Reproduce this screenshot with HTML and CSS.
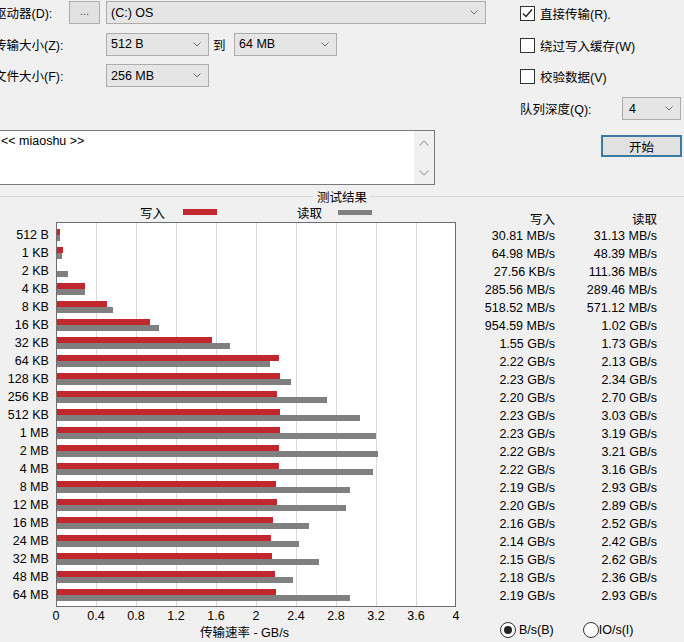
FILE: index.html
```html
<!DOCTYPE html>
<html lang="zh-CN">
<head>
    <meta charset="UTF-8">
    <title>磁盘基准测试</title>
    <link rel="stylesheet" href="styles.css">
</head>
<body>
<div class="window">
    <!-- 设置区 -->
    <div class="top">
        <div class="left">
            <div class="settings">
                <span class="lbl">驱动器(D):</span>
                <button class="btn-dots">...</button>
                <div class="combo combo-drive">(C:) OS
                    <svg class="chev" width="8" height="5" viewBox="0 0 8 5"><polyline points="0.5,0.5 4,4 7.5,0.5"/></svg>
                </div>

                <span class="lbl">传输大小(Z):</span>
                <div class="combo combo-from">512 B
                    <svg class="chev" width="8" height="5" viewBox="0 0 8 5"><polyline points="0.5,0.5 4,4 7.5,0.5"/></svg>
                </div>
                <span class="to">到</span>
                <div class="combo combo-to">64 MB
                    <svg class="chev" width="8" height="5" viewBox="0 0 8 5"><polyline points="0.5,0.5 4,4 7.5,0.5"/></svg>
                </div>

                <span class="lbl">文件大小(F):</span>
                <div class="combo combo-file">256 MB
                    <svg class="chev" width="8" height="5" viewBox="0 0 8 5"><polyline points="0.5,0.5 4,4 7.5,0.5"/></svg>
                </div>
            </div>

            <div class="memo">
                <div class="memo-text">&lt;&lt; miaoshu &gt;&gt;</div>
                <div class="memo-scroll">
                    <svg width="10" height="6" viewBox="0 0 10 6"><polyline points="0.5,5.5 5,1 9.5,5.5"/></svg>
                    <svg width="10" height="6" viewBox="0 0 10 6"><polyline points="0.5,0.5 5,5 9.5,0.5"/></svg>
                </div>
            </div>
        </div>

        <div class="options">
            <label class="check">
                <span class="box"><svg width="13" height="13" viewBox="0 0 13 13"><polyline points="2,6.5 5,9.5 11,2.5"/></svg></span>
                直接传输(R).
            </label>
            <label class="check">
                <span class="box"></span>
                绕过写入缓存(W)
            </label>
            <label class="check">
                <span class="box"></span>
                校验数据(V)
            </label>
            <div class="queue">
                <span>队列深度(Q):</span>
                <div class="combo combo-queue">4
                    <svg class="chev" width="8" height="5" viewBox="0 0 8 5"><polyline points="0.5,0.5 4,4 7.5,0.5"/></svg>
                </div>
            </div>
            <button class="btn-start">开始</button>
        </div>
    </div>

    <!-- 测试结果 -->
    <div class="group-caption"><span>测试结果</span></div>

    <div class="results">
        <div class="chart-side">
            <div class="legend">
                <span>写入</span>
                <i class="swatch swatch-w"></i>
                <span class="legend-read">读取</span>
                <i class="swatch swatch-r"></i>
            </div>

            <div class="plot-row">
                <div class="sizes">
                    <div>512 B</div><div>1 KB</div><div>2 KB</div><div>4 KB</div><div>8 KB</div>
                    <div>16 KB</div><div>32 KB</div><div>64 KB</div><div>128 KB</div><div>256 KB</div>
                    <div>512 KB</div><div>1 MB</div><div>2 MB</div><div>4 MB</div><div>8 MB</div>
                    <div>12 MB</div><div>16 MB</div><div>24 MB</div><div>32 MB</div><div>48 MB</div>
                    <div>64 MB</div>
                </div>
                <div class="plot">
                    <div class="bars"><i class="bar w" style="width:3px"></i><i class="bar r" style="width:3px"></i></div>
                    <div class="bars"><i class="bar w" style="width:6.3px"></i><i class="bar r" style="width:4.7px"></i></div>
                    <div class="bars"><i class="bar w" style="width:0"></i><i class="bar r" style="width:10.9px"></i></div>
                    <div class="bars"><i class="bar w" style="width:27.9px"></i><i class="bar r" style="width:28.3px"></i></div>
                    <div class="bars"><i class="bar w" style="width:50.6px"></i><i class="bar r" style="width:55.8px"></i></div>
                    <div class="bars"><i class="bar w" style="width:93.2px"></i><i class="bar r" style="width:102px"></i></div>
                    <div class="bars"><i class="bar w" style="width:155px"></i><i class="bar r" style="width:173px"></i></div>
                    <div class="bars"><i class="bar w" style="width:222px"></i><i class="bar r" style="width:213px"></i></div>
                    <div class="bars"><i class="bar w" style="width:223px"></i><i class="bar r" style="width:234px"></i></div>
                    <div class="bars"><i class="bar w" style="width:220px"></i><i class="bar r" style="width:270px"></i></div>
                    <div class="bars"><i class="bar w" style="width:223px"></i><i class="bar r" style="width:303px"></i></div>
                    <div class="bars"><i class="bar w" style="width:223px"></i><i class="bar r" style="width:319px"></i></div>
                    <div class="bars"><i class="bar w" style="width:222px"></i><i class="bar r" style="width:321px"></i></div>
                    <div class="bars"><i class="bar w" style="width:222px"></i><i class="bar r" style="width:316px"></i></div>
                    <div class="bars"><i class="bar w" style="width:219px"></i><i class="bar r" style="width:293px"></i></div>
                    <div class="bars"><i class="bar w" style="width:220px"></i><i class="bar r" style="width:289px"></i></div>
                    <div class="bars"><i class="bar w" style="width:216px"></i><i class="bar r" style="width:252px"></i></div>
                    <div class="bars"><i class="bar w" style="width:214px"></i><i class="bar r" style="width:242px"></i></div>
                    <div class="bars"><i class="bar w" style="width:215px"></i><i class="bar r" style="width:262px"></i></div>
                    <div class="bars"><i class="bar w" style="width:218px"></i><i class="bar r" style="width:236px"></i></div>
                    <div class="bars"><i class="bar w" style="width:219px"></i><i class="bar r" style="width:293px"></i></div>
                </div>
            </div>

            <div class="ticks">
                <span>0</span><span>0.4</span><span>0.8</span><span>1.2</span><span>1.6</span><span>2</span>
                <span>2.4</span><span>2.8</span><span>3.2</span><span>3.6</span><span>4</span>
            </div>
            <div class="axis-title">传输速率 - GB/s</div>
        </div>

        <div class="values-side">
            <div class="values">
                <span>写入</span><span>读取</span>
                <span>30.81 MB/s</span><span>31.13 MB/s</span>
                <span>64.98 MB/s</span><span>48.39 MB/s</span>
                <span>27.56 KB/s</span><span>111.36 MB/s</span>
                <span>285.56 MB/s</span><span>289.46 MB/s</span>
                <span>518.52 MB/s</span><span>571.12 MB/s</span>
                <span>954.59 MB/s</span><span>1.02 GB/s</span>
                <span>1.55 GB/s</span><span>1.73 GB/s</span>
                <span>2.22 GB/s</span><span>2.13 GB/s</span>
                <span>2.23 GB/s</span><span>2.34 GB/s</span>
                <span>2.20 GB/s</span><span>2.70 GB/s</span>
                <span>2.23 GB/s</span><span>3.03 GB/s</span>
                <span>2.23 GB/s</span><span>3.19 GB/s</span>
                <span>2.22 GB/s</span><span>3.21 GB/s</span>
                <span>2.22 GB/s</span><span>3.16 GB/s</span>
                <span>2.19 GB/s</span><span>2.93 GB/s</span>
                <span>2.20 GB/s</span><span>2.89 GB/s</span>
                <span>2.16 GB/s</span><span>2.52 GB/s</span>
                <span>2.14 GB/s</span><span>2.42 GB/s</span>
                <span>2.15 GB/s</span><span>2.62 GB/s</span>
                <span>2.18 GB/s</span><span>2.36 GB/s</span>
                <span>2.19 GB/s</span><span>2.93 GB/s</span>
            </div>
            <div class="units">
                <label class="radio"><span class="dot on"></span>B/s(B)</label>
                <label class="radio radio-io"><span class="dot"></span>IO/s(I)</label>
            </div>
        </div>
    </div>
</div>
</body>
</html>
```

FILE: styles.css
```css
body {
    margin: 0;
    padding: 0;
    background-color: #f0f0f0;
    font-family: "Liberation Sans", "Noto Sans CJK SC", sans-serif;
    font-size: 12.5px;
    color: #000;
}

.window {
    width: 684px;
    height: 642px;
    overflow: hidden;
    background-color: #f0f0f0;
}

/* 设置区 */
.top {
    display: flex;
    height: 185px;
}

.left {
    width: 486px;
}

.settings {
    display: grid;
    grid-template-columns: 75px 37px 103px 25px 103px 1fr;
    grid-auto-rows: 23px;
    row-gap: 8.5px;
    align-items: center;
    margin-left: -6px;
    padding-top: 1px;
}

.lbl {
    grid-column: 1;
}

.btn-dots {
    grid-column: 2;
    width: 31px;
    height: 23px;
    padding: 0 0 4px;
    font: inherit;
    font-size: 11px;
    color: #444;
    background-color: #e1e1e1;
    border: 1px solid #adadad;
}

.combo {
    display: flex;
    align-items: center;
    justify-content: space-between;
    box-sizing: border-box;
    height: 23px;
    padding: 0 7px 0 4px;
    background-color: #e5e5e5;
    border: 1px solid #acacac;
}

.chev polyline {
    fill: none;
    stroke: #707070;
    stroke-width: 1;
}

.combo-drive {
    grid-column: 3 / 7;
}

.combo-from,
.combo-file {
    grid-column: 3;
}

.combo-to {
    grid-column: 5;
}

.to {
    grid-column: 4;
    padding-left: 4px;
}

.memo {
    display: flex;
    box-sizing: border-box;
    width: 439px;
    height: 55px;
    margin: 43px 0 0 -4px;
    background-color: #fff;
    border: 1px solid #7a7a7a;
}

.memo-text {
    flex: 1;
    padding: 3px 0 0 4px;
}

.memo-scroll {
    display: flex;
    flex-direction: column;
    justify-content: space-between;
    align-items: center;
    width: 20px;
    padding: 9px 0 8px;
    box-sizing: border-box;
    background-color: #f0f0f0;
}

.memo-scroll polyline {
    fill: none;
    stroke: #b0b0b0;
    stroke-width: 1.2;
}

/* 选项 */
.options {
    display: flex;
    flex-direction: column;
    width: 162px;
    margin-left: 34px;
    padding-top: 6px;
}

.check {
    display: flex;
    align-items: center;
    gap: 5px;
    height: 15px;
    margin-bottom: 16.5px;
}

.box {
    display: block;
    box-sizing: border-box;
    width: 15px;
    height: 15px;
    background-color: #fff;
    border: 1px solid #333;
}

.box svg {
    display: block;
}

.box polyline {
    fill: none;
    stroke: #222;
    stroke-width: 1.4;
}

.queue {
    display: flex;
    align-items: center;
    justify-content: space-between;
    margin-top: -3.5px;
}

.combo-queue {
    width: 59px;
    margin-right: 1px;
    padding-left: 6px;
}

.btn-start {
    align-self: flex-end;
    width: 81px;
    height: 22px;
    margin-top: 15px;
    padding: 0;
    font: inherit;
    background-color: #e1e1e1;
    border: 2px solid #3d7aa3;
}

/* 测试结果 */
.group-caption {
    display: flex;
    align-items: center;
    height: 12px;
    margin-top: 5px;
}

.group-caption::before,
.group-caption::after {
    content: "";
    border-top: 1px solid #d6d6d6;
}

.group-caption::before {
    width: 313px;
}

.group-caption::after {
    flex: 1;
}

.group-caption span {
    padding: 0 3px 0 4px;
}

.results {
    display: flex;
}

.chart-side {
    width: 456px;
}

.legend {
    display: flex;
    align-items: center;
    height: 20px;
    padding-left: 140px;
}

.swatch {
    display: block;
    width: 34px;
}

.swatch-w {
    height: 6px;
    margin-left: 18px;
    background-color: #c1272d;
}

.legend-read {
    margin-left: 80px;
}

.swatch-r {
    height: 5px;
    margin-left: 16px;
    background-color: #808080;
}

.plot-row {
    display: flex;
}

.sizes {
    width: 56px;
    padding-top: 4px;
}

.sizes div {
    height: 18px;
    line-height: 18px;
    padding-right: 7px;
    text-align: right;
}

.plot {
    width: 399px;
    padding: 3px 0 2px;
    background-color: #fff;
    background-image: repeating-linear-gradient(to right, transparent 0 39px, #dadada 39px 40px);
    border: 1px solid #6e6e6e;
}

.bars {
    box-sizing: border-box;
    height: 18px;
    padding-top: 3px;
}

.bar {
    display: block;
    height: 6px;
}

.bar.w {
    background-color: #c1272d;
}

.bar.r {
    background-color: #808080;
}

.ticks {
    display: flex;
    width: 440px;
    height: 18px;
    margin-left: 36px;
    align-items: center;
}

.ticks span {
    width: 40px;
    text-align: center;
}

.axis-title {
    padding-left: 200px;
    line-height: 17px;
}

.values-side {
    width: 228px;
    padding-top: 7px;
}

.values {
    display: grid;
    grid-template-columns: 99px 102px;
    grid-auto-rows: 18px;
    align-items: center;
    text-align: right;
}

.units {
    display: flex;
    align-items: center;
    height: 18px;
    margin-top: 16px;
    padding-left: 44px;
}

.radio {
    display: flex;
    align-items: center;
    gap: 3px;
}

.radio-io {
    margin-left: 29px;
    gap: 0;
}

.dot {
    display: flex;
    align-items: center;
    justify-content: center;
    box-sizing: border-box;
    width: 16px;
    height: 16px;
    background-color: #fff;
    border: 1px solid #333;
    border-radius: 50%;
}

.dot.on::after {
    content: "";
    width: 8px;
    height: 8px;
    border-radius: 50%;
    background-color: #222;
}
```
